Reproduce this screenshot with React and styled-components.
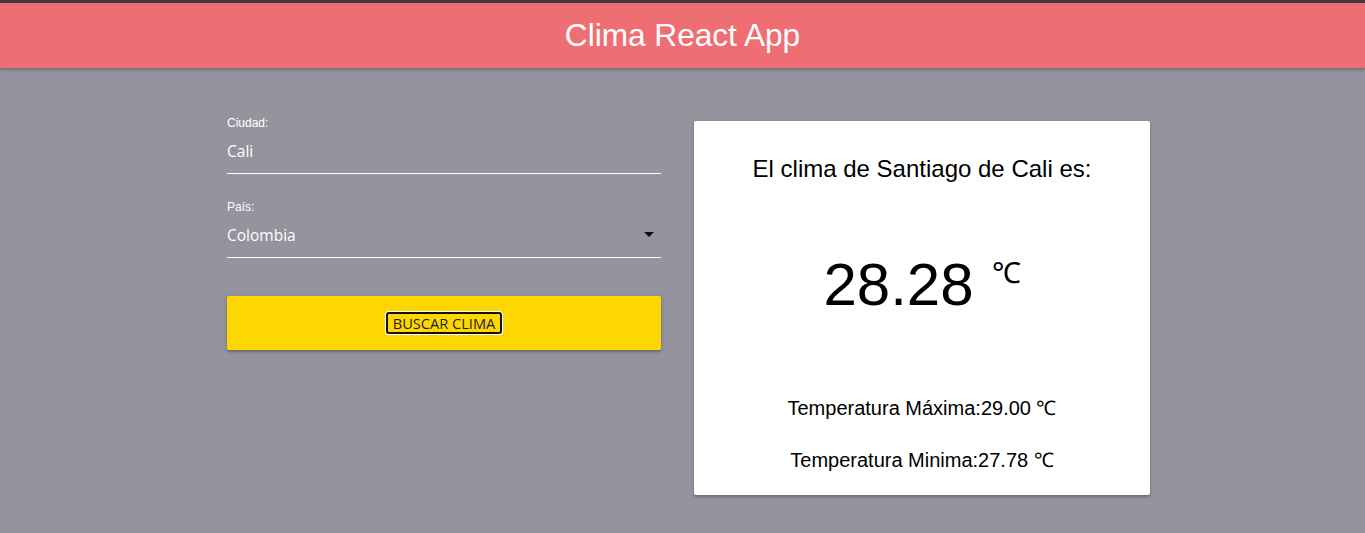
import React from "react";
import styled, { createGlobalStyle } from "styled-components";

const Global = createGlobalStyle`
  html, body { margin: 0; padding: 0; }
  body {
    background: #95939d;
    font-family: "Liberation Sans", Arial, sans-serif;
    min-height: 533px;
    border-top: 3px solid #3c3c3c;
  }
`;

const Header = styled.header`
  height: 65px;
  background: #ef6e73;
  box-shadow: 0 2px 3px rgba(0,0,0,0.25);
  display: flex;
  align-items: center;
  justify-content: center;
  position: relative;
  z-index: 1;
`;

const Title = styled.h1`
  margin: 0;
  color: #fff;
  font-weight: 400;
  font-size: 31.6px;
  font-family: "Liberation Sans", Arial, sans-serif;
`;

const Main = styled.main`
  display: grid;
  grid-template-columns: 434px 456px;
  column-gap: 33px;
  padding: 48px 0 0 227px;
  align-items: start;
`;

const Form = styled.form`
  display: flex;
  flex-direction: column;
`;

const Field = styled.div`
  display: flex;
  flex-direction: column;
  border-bottom: 1px solid #fff;
  margin-top: ${p => p.$mt || 0}px;
  position: relative;
`;

const Label = styled.label`
  color: #fff;
  font-size: 12px;
  font-family: "Liberation Sans", Arial, sans-serif;
  line-height: 14px;
`;

const Value = styled.div`
  color: #fff;
  font-size: 15.5px;
  font-family: "Open Sans", "Noto Sans", sans-serif;
  height: 41px;
  margin-top: 2px;
  padding-bottom: 4px;
  box-sizing: border-box;
  display: flex;
  align-items: center;
  justify-content: space-between;
`;

const Caret = styled.span`
  width: 0;
  height: 0;
  border-left: 5px solid transparent;
  border-right: 5px solid transparent;
  border-top: 5px solid #111;
  margin-right: 7px;
`;

const Button = styled.button`
  margin-top: 38px;
  height: 54px;
  background: #ffd700;
  border: none;
  border-radius: 2px;
  box-shadow: 0 2px 2px rgba(0,0,0,0.2), 0 1px 4px rgba(0,0,0,0.15);
  display: flex;
  align-items: center;
  justify-content: center;
  padding: 0;
`;

const ButtonText = styled.span`
  font-family: "Open Sans", "Noto Sans", sans-serif;
  font-size: 14.6px;
  color: #222;
  padding: 1px 5px;
  border: 2px solid #111;
  border-radius: 3px;
  box-shadow: 0 0 0 1px #fff;
  line-height: 16px;
`;

const Card = styled.section`
  background: #fff;
  border-radius: 2px;
  box-shadow: 0 2px 3px rgba(0,0,0,0.28);
  height: 374px;
  margin-top: 5px;
  display: flex;
  flex-direction: column;
  align-items: center;
  color: #000;
`;

const CardTitle = styled.h2`
  margin: 35px 0 0;
  font-weight: 400;
  font-size: 24px;
  line-height: 26px;
`;

const Temp = styled.div`
  margin-top: 68px;
  font-size: 60px;
  line-height: 70px;
  display: flex;
  align-items: flex-start;
`;

const Unit = styled.span`
  font-size: 29px;
  line-height: 30px;
  margin-left: 18px;
  margin-top: 8px;
`;

const Stat = styled.p`
  margin: ${p => p.$mt}px 0 0;
  font-size: 20px;
  line-height: 24px;
`;

export default function App() {
  return (
    <>
      <Global />
      <Header>
        <Title>Clima React App</Title>
      </Header>
      <Main>
        <Form onSubmit={e => e.preventDefault()}>
          <Field>
            <Label>Ciudad:</Label>
            <Value>Cali</Value>
          </Field>
          <Field $mt={26}>
            <Label>País:</Label>
            <Value>
              Colombia
              <Caret />
            </Value>
          </Field>
          <Button type="submit">
            <ButtonText>BUSCAR CLIMA</ButtonText>
          </Button>
        </Form>
        <Card>
          <CardTitle>El clima de Santiago de Cali es:</CardTitle>
          <Temp>
            28.28<Unit>℃</Unit>
          </Temp>
          <Stat $mt={76}>Temperatura Máxima:29.00 ℃</Stat>
          <Stat $mt={28}>Temperatura Minima:27.78 ℃</Stat>
        </Card>
      </Main>
    </>
  );
}
